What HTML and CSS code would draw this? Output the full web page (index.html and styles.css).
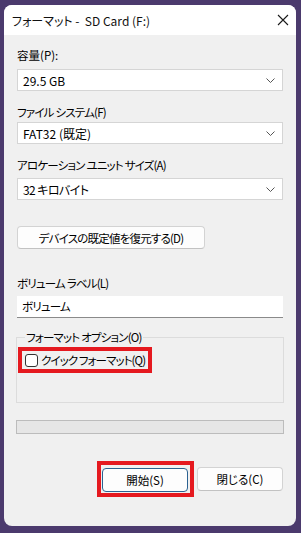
FILE: index.html
```html
<!DOCTYPE html>
<html lang="ja">
<head>
    <meta charset="UTF-8">
    <meta name="viewport" content="width=device-width, initial-scale=1.0">
    <title>フォーマット</title>
    <link rel="stylesheet" href="styles.css">
</head>
<body>
    <div class="window">
        <div class="titlebar">
            <span class="title">フォーマット -&nbsp; SD Card (F:)</span>
            <svg class="close" width="12" height="12" viewBox="0 0 12 12">
                <path d="M1 1L11 11M11 1L1 11" stroke="#1a1a1a" stroke-width="1.1" fill="none"/>
            </svg>
        </div>

        <div class="content">
            <div class="field-label lbl-capacity">容量(P):</div>
            <div class="combo">
                <span>29.5 GB</span>
                <svg class="chevron" width="9" height="5" viewBox="0 0 9 5"><path d="M0.5 0.5L4.5 4.5L8.5 0.5" stroke="#555" fill="none"/></svg>
            </div>

            <div class="field-label lbl-fs">ファイル システム(F)</div>
            <div class="combo combo-fs">
                <span>FAT32 (既定)</span>
                <svg class="chevron" width="9" height="5" viewBox="0 0 9 5"><path d="M0.5 0.5L4.5 4.5L8.5 0.5" stroke="#555" fill="none"/></svg>
            </div>

            <div class="field-label lbl-alloc">アロケーション ユニット サイズ(A)</div>
            <div class="combo combo-alloc">
                <span class="jp">32 キロバイト</span>
                <svg class="chevron" width="9" height="5" viewBox="0 0 9 5"><path d="M0.5 0.5L4.5 4.5L8.5 0.5" stroke="#555" fill="none"/></svg>
            </div>

            <button class="btn btn-restore">デバイスの既定値を復元する(D)</button>

            <div class="field-label lbl-volume">ボリューム ラベル(L)</div>
            <div class="textbox">ボリューム</div>

            <fieldset class="options">
                <legend>フォーマット オプション(O)</legend>
                <div class="check-row highlight">
                    <span class="checkbox"></span>
                    <span>クイック フォーマット(Q)</span>
                </div>
            </fieldset>

            <div class="progress"></div>

            <div class="actions">
                <div class="highlight start-wrap">
                    <button class="btn btn-default">開始(S)</button>
                </div>
                <button class="btn">閉じる(C)</button>
            </div>
        </div>
    </div>
</body>
</html>
```

FILE: styles.css
```css
body {
    margin: 0;
    padding: 5px 5px 7px 4px;
    background-color: #4b3a6d;
    font-family: "Noto Sans CJK JP", "Noto Sans", sans-serif;
    font-size: 12px;
    font-feature-settings: "palt";
    color: #000;
    height: 533px;
    box-sizing: border-box;
    overflow: hidden;
}

.window {
    width: 292px;
    height: 521px;
    background-color: #f0f0f0;
    border-radius: 8px;
    overflow: hidden;
    display: flex;
    flex-direction: column;
}

.titlebar {
    height: 30px;
    background-color: #fff;
    display: flex;
    align-items: center;
    justify-content: space-between;
    padding: 0 7px 0 8px;
    flex-shrink: 0;
}

.title {
    font-size: 12px;
    color: #111;
}

.content {
    padding: 0 13px;
    display: flex;
    flex-direction: column;
    font-size: 11.5px;
    letter-spacing: -0.8px;
}

.field-label {
    line-height: 16px;
    height: 16px;
    white-space: nowrap;
}

.lbl-capacity { margin-top: 12px; letter-spacing: 0; }
.lbl-fs { margin-top: 13px; }
.lbl-alloc { margin-top: 13px; }
.lbl-volume { margin-top: 26px; }

.combo {
    margin-top: 6px;
    height: 22px;
    box-sizing: border-box;
    background-color: #fff;
    border: 1px solid #d5d5d5;
    display: flex;
    align-items: center;
    justify-content: space-between;
    padding: 0 7px 0 5px;
    font-size: 12px;
    letter-spacing: 0;
}

.combo .jp {
    letter-spacing: -0.6px;
}

.combo-fs { margin-top: 2px; }
.combo-alloc { margin-top: 5px; }

.btn {
    font-family: inherit;
    font-feature-settings: "palt";
    font-size: 11.5px;
    letter-spacing: -0.8px;
    color: #000;
    background-color: #fdfdfd;
    border: 1px solid #d3d3d3;
    border-bottom-color: #c2c2c2;
    border-radius: 4px;
    height: 24px;
    padding: 0;
}

.btn-restore {
    margin-top: 26px;
    width: 188px;
    height: 23px;
}

.textbox {
    margin-top: 5px;
    height: 22px;
    box-sizing: border-box;
    background-color: #fff;
    border-bottom: 1px solid #8a8a8a;
    padding: 0 5px;
    line-height: 21px;
}

.options {
    margin: 11px -1px 0 -1px;
    padding: 1px 8px 0 8px;
    border: 1px solid #dcdcdc;
    height: 74px;
    box-sizing: border-box;
}

.options legend {
    padding: 0 1px;
    line-height: 16px;
}

.highlight {
    border: 4px solid #e5191f;
}

.check-row {
    display: flex;
    align-items: center;
    gap: 3px;
    width: 134px;
    height: 26px;
    margin: 1px 0 0 -7px;
    padding-left: 3px;
    box-sizing: border-box;
    white-space: nowrap;
    overflow: hidden;
    letter-spacing: -0.9px;
}

.checkbox {
    width: 13px;
    height: 13px;
    box-sizing: border-box;
    border: 1px solid #333;
    border-radius: 3px;
    background-color: #fff;
    flex-shrink: 0;
}

.progress {
    margin: 17px -1px 0 -1px;
    height: 14px;
    box-sizing: border-box;
    border: 1px solid #bcbcbc;
    background-color: #e6e6e6;
}

.actions {
    margin-top: 27px;
    display: flex;
    justify-content: flex-end;
    align-items: center;
    gap: 3px;
}

.start-wrap {
    padding: 3px 2px 1px 1px;
    display: flex;
}

.actions .btn {
    width: 86px;
    letter-spacing: 0;
}

.btn-default {
    border-color: #2b6291;
}
```
